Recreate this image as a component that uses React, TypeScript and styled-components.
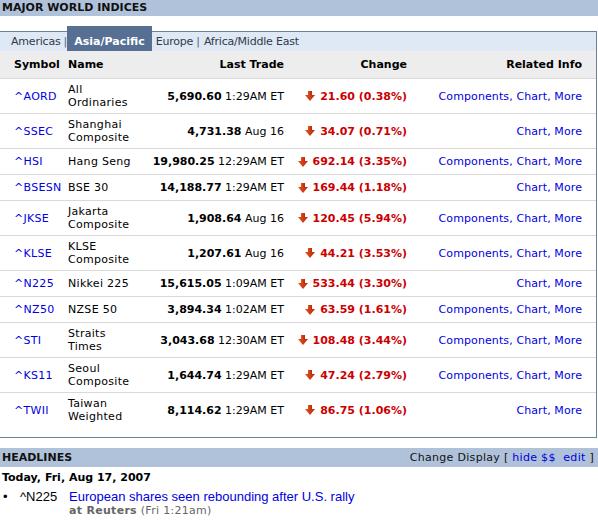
import React from "react";
import styled, { createGlobalStyle } from "styled-components";

const Global = createGlobalStyle`
  html, body { margin: 0; padding: 0; background: #fff; }
  body { font-family: "DejaVu Sans", Verdana, sans-serif; font-size: 11px; color: #000; }
  a { color: #0000e0; text-decoration: none; }
`;

const Page = styled.div`
  width: 598px;
`;

const TitleBar = styled.div`
  height: 16px;
  background: #b0c2d9;
  font-weight: bold;
  font-size: 11px;
  line-height: 15px;
  padding-left: 2px;
  color: #111;
`;

const Box = styled.div`
  width: 597px;
  box-sizing: border-box;
  margin-top: 15px;
  border-right: 1px solid #6d8099;
  border-bottom: 1px solid #6d8099;
  padding-bottom: 10px;
`;

const TabBar = styled.div`
  height: 19px;
  background: #dfe8f5;
  border-top: 1px solid #6d8099;
  display: flex;
  align-items: stretch;
  padding-left: 11px;
`;

const Tab = styled.span<{ $first?: boolean }>`
  display: flex;
  align-items: center;
  color: #333a46;
  letter-spacing: -0.2px;
  padding: 0 3px 0 ${(p) => (p.$first ? "0" : "4px")};
`;

const Sep = styled.span`
  display: flex;
  align-items: center;
  color: #56647a;
`;

const ActiveTab = styled.span`
  display: flex;
  align-items: center;
  margin-top: -6px;
  padding: 6px 7px 0 7px;
  background: #566f93;
  color: #fff;
  font-weight: bold;
`;

const Grid = styled.div`
  display: grid;
  grid-template-columns: 54px 78px 138px 123px 175px;
  padding: 0 14px 0 14px;
  align-items: center;
  box-sizing: border-box;
`;

const HeaderRow = styled(Grid)`
  height: 27px;
  background: #ededed;
  font-weight: bold;
`;

const Row = styled(Grid)`
  min-height: 26px;
  padding-top: 4px;
  padding-bottom: 4px;
  border-top: 1px solid #d9d9d9;
  line-height: 13px;
`;

const Right = styled.div`
  text-align: right;
  white-space: nowrap;
`;

const NameCell = styled.div`
  white-space: pre-line;
  letter-spacing: 0.3px;
`;

const SymLink = styled.a`
  letter-spacing: 0.3px;
`;

const ChangeCell = styled.div`
  display: flex;
  justify-content: flex-end;
  align-items: center;
  gap: 5px;
  color: #cc0000;
  font-weight: bold;
  white-space: nowrap;
`;

const Links = styled.div`
  text-align: right;
  white-space: nowrap;
  color: #0000e0;
  letter-spacing: 0.1px;
`;

const HeadBar = styled.div`
  margin-top: 10px;
  height: 19px;
  background: #b0c2d9;
  display: flex;
  align-items: center;
  justify-content: space-between;
  padding: 0 4px 0 2px;
`;

const HeadTitle = styled.span`
  font-weight: bold;
  color: #111;
`;

const HeadTools = styled.span`
  letter-spacing: 0.3px;
  color: #111;
  white-space: pre;
`;

const DateLine = styled.div`
  margin-top: 4px;
  padding-left: 2px;
  font-weight: bold;
  line-height: 13px;
`;

const Item = styled.div`
  margin-top: 5px;
  display: grid;
  grid-template-columns: 17px 49px 1fr;
  padding-left: 3px;
`;

const ArialText = styled.span`
  font-family: "Liberation Sans", Arial, sans-serif;
  font-size: 13px;
  line-height: 15px;
`;

const ItemLink = styled.a`
  font-family: "Liberation Sans", Arial, sans-serif;
  font-size: 13px;
  line-height: 15px;
`;

const Source = styled.div`
  grid-column: 3;
  color: #666;
  line-height: 13px;
  letter-spacing: 0.3px;
`;

const Arrow = () => (
  <svg width="10" height="10" viewBox="0 0 10 10">
    <defs>
      <linearGradient id="ag" x1="0" y1="0" x2="1" y2="0">
        <stop offset="0" stopColor="#e2521e" />
        <stop offset="1" stopColor="#b82a08" />
      </linearGradient>
    </defs>
    <rect x="3" y="0" width="4" height="5" fill="url(#ag)" />
    <polygon points="0,4 10,4 5,10" fill="url(#ag)" />
  </svg>
);

type Idx = {
  sym: string;
  name: string;
  price: string;
  time: string;
  chg: string;
  comp: boolean;
};

const data: Idx[] = [
  { sym: "^AORD", name: "All\nOrdinaries", price: "5,690.60", time: "1:29AM ET", chg: "21.60 (0.38%)", comp: true },
  { sym: "^SSEC", name: "Shanghai\nComposite", price: "4,731.38", time: "Aug 16", chg: "34.07 (0.71%)", comp: false },
  { sym: "^HSI", name: "Hang Seng", price: "19,980.25", time: "12:29AM ET", chg: "692.14 (3.35%)", comp: true },
  { sym: "^BSESN", name: "BSE 30", price: "14,188.77", time: "1:29AM ET", chg: "169.44 (1.18%)", comp: false },
  { sym: "^JKSE", name: "Jakarta\nComposite", price: "1,908.64", time: "Aug 16", chg: "120.45 (5.94%)", comp: true },
  { sym: "^KLSE", name: "KLSE\nComposite", price: "1,207.61", time: "Aug 16", chg: "44.21 (3.53%)", comp: true },
  { sym: "^N225", name: "Nikkei 225", price: "15,615.05", time: "1:09AM ET", chg: "533.44 (3.30%)", comp: false },
  { sym: "^NZ50", name: "NZSE 50", price: "3,894.34", time: "1:02AM ET", chg: "63.59 (1.61%)", comp: true },
  { sym: "^STI", name: "Straits\nTimes", price: "3,043.68", time: "12:30AM ET", chg: "108.48 (3.44%)", comp: true },
  { sym: "^KS11", name: "Seoul\nComposite", price: "1,644.74", time: "1:29AM ET", chg: "47.24 (2.79%)", comp: true },
  { sym: "^TWII", name: "Taiwan\nWeighted", price: "8,114.62", time: "1:29AM ET", chg: "86.75 (1.06%)", comp: false },
];

export default function App() {
  return (
    <Page>
      <Global />
      <TitleBar>MAJOR WORLD INDICES</TitleBar>
      <Box>
        <TabBar>
          <Tab $first>Americas</Tab>
          <Sep>|</Sep>
          <ActiveTab>Asia/Pacific</ActiveTab>
          <Tab>Europe</Tab>
          <Sep>|</Sep>
          <Tab>Africa/Middle East</Tab>
        </TabBar>
        <HeaderRow>
          <div>Symbol</div>
          <div>Name</div>
          <Right>Last Trade</Right>
          <Right>Change</Right>
          <Right>Related Info</Right>
        </HeaderRow>
        {data.map((d) => (
          <Row key={d.sym}>
            <div>
              <SymLink href="#">{d.sym}</SymLink>
            </div>
            <NameCell>{d.name}</NameCell>
            <Right>
              <b>{d.price}</b> {d.time}
            </Right>
            <ChangeCell>
              <Arrow />
              <span>{d.chg}</span>
            </ChangeCell>
            <Links>
              {d.comp && <a href="#">Components</a>}
              {d.comp && ", "}
              <a href="#">Chart</a>, <a href="#">More</a>
            </Links>
          </Row>
        ))}
      </Box>
      <HeadBar>
        <HeadTitle>HEADLINES</HeadTitle>
        <HeadTools>
          Change Display [ <a href="#">hide $$</a>  <a href="#">edit</a> ]
        </HeadTools>
      </HeadBar>
      <DateLine>Today, Fri, Aug 17, 2007</DateLine>
      <Item>
        <ArialText>•</ArialText>
        <ArialText>^N225</ArialText>
        <ItemLink href="#">European shares seen rebounding after U.S. rally</ItemLink>
        <Source>
          <b>at Reuters</b> (Fri 1:21am)
        </Source>
      </Item>
    </Page>
  );
}
